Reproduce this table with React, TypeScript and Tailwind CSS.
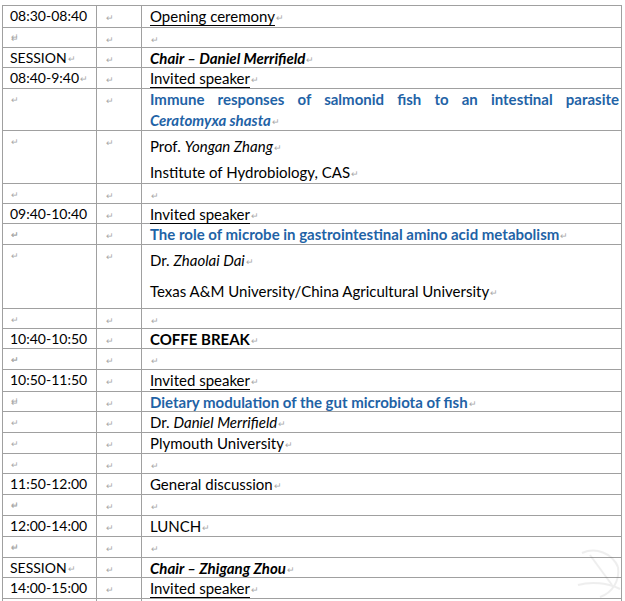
import React from "react";

type Row = {
  h: string;
  c1?: React.ReactNode;
  c3?: React.ReactNode;
  tall?: boolean;
  blank?: boolean;
};

const Mark = () => (
  <span className="ml-[1px] inline-block text-[9px] leading-none text-[#a8a8a8] align-[1px]">↵</span>
);

const Blue = ({ children }: { children: React.ReactNode }) => (
  <span className="font-bold text-[#1f63a6]">{children}</span>
);

const U = ({ children }: { children: React.ReactNode }) => (
  <span className="underline decoration-1 underline-offset-[3px]">{children}</span>
);

const rows: Row[] = [
  { h: "h-[22px]", c1: "08:30-08:40", c3: <U>Opening ceremony</U> },
  { h: "h-[20px]" },
  { h: "h-[20px]", c1: "SESSION", c3: <span className="font-bold italic">Chair – Daniel Merrifield</span> },
  { h: "h-[21px]", c1: "08:40-9:40", c3: <U>Invited speaker</U> },
  {
    h: "h-[42px]",
    tall: true,
    c3: (
      <div className="leading-[21px]">
        <div className="text-justify [text-align-last:justify]">
          <Blue>Immune responses of salmonid fish to an intestinal parasite</Blue>
        </div>
        <div>
          <Blue>
            <span className="italic">Ceratomyxa shasta</span>
          </Blue>
          <Mark />
        </div>
      </div>
    ),
  },
  {
    h: "h-[53px]",
    tall: true,
    c3: (
      <div className="flex flex-col gap-[6px] pt-[5px]">
        <div className="leading-[20px]">
          Prof. <span className="italic">Yongan Zhang</span>
          <Mark />
        </div>
        <div className="leading-[20px]">
          Institute of Hydrobiology, CAS
          <Mark />
        </div>
      </div>
    ),
  },
  { h: "h-[20px]" },
  { h: "h-[20px]", c1: "09:40-10:40", c3: <U>Invited speaker</U> },
  { h: "h-[21px]", c3: <Blue>The role of microbe in gastrointestinal amino acid metabolism</Blue> },
  {
    h: "h-[64px]",
    tall: true,
    c3: (
      <div className="flex flex-col gap-[11px] pt-[5px]">
        <div className="leading-[20px]">
          Dr. <span className="italic">Zhaolai Dai</span>
          <Mark />
        </div>
        <div className="leading-[20px]">
          Texas A&amp;M University/China Agricultural University
          <Mark />
        </div>
      </div>
    ),
  },
  { h: "h-[20px]" },
  { h: "h-[20px]", c1: "10:40-10:50", c3: <span className="font-bold">COFFE BREAK</span> },
  { h: "h-[21px]" },
  { h: "h-[22px]", c1: "10:50-11:50", c3: <U>Invited speaker</U> },
  { h: "h-[20px]", c3: <Blue>Dietary modulation of the gut microbiota of fish</Blue> },
  { h: "h-[21px]", c3: <>Dr. <span className="italic">Daniel Merrifield</span></> },
  { h: "h-[21px]", c3: "Plymouth University" },
  { h: "h-[20px]" },
  { h: "h-[21px]", c1: "11:50-12:00", c3: "General discussion" },
  { h: "h-[21px]" },
  { h: "h-[21px]", c1: "12:00-14:00", c3: "LUNCH" },
  { h: "h-[21px]" },
  { h: "h-[20px]", c1: "SESSION", c3: <span className="font-bold italic">Chair – Zhigang Zhou</span> },
  { h: "h-[21px]", c1: "14:00-15:00", c3: <U>Invited speaker</U> },
  { h: "h-[21px]", blank: true },
];

export default function App() {
  return (
    <div
      className="relative h-[601px] w-[625px] overflow-hidden bg-white text-[15px] text-black"
      style={{ fontFamily: "Lato, 'Open Sans', sans-serif" }}
    >
      <div className="ml-[2px] mt-[5px] flex w-[620px] flex-col border-l border-t border-[#a0a0a0]">
        {rows.map((r, i) => (
          <div key={i} className={`flex border-b border-[#a0a0a0] ${r.h}`}>
            <div className="flex w-[94px] items-start border-r border-[#a0a0a0] pl-[7px] text-[14px] leading-[20px]">
              {!r.blank && (
                <div>
                  {r.c1}
                  <Mark />
                </div>
              )}
            </div>
            <div className="w-[45px] border-r border-[#a0a0a0] pl-[8px] leading-[20px]">
              {!r.blank && <Mark />}
            </div>
            <div className="flex-1 border-r border-[#a0a0a0] pl-[8px] pr-[2px] leading-[20px]">
              {r.blank ? null : r.tall ? (
                r.c3
              ) : (
                <div>
                  {r.c3}
                  <Mark />
                </div>
              )}
            </div>
          </div>
        ))}
      </div>
      <svg
        className="pointer-events-none absolute left-[572px] top-[545px] opacity-[0.1]"
        width="52"
        height="56"
        viewBox="0 0 52 56"
        fill="none"
        stroke="#666"
        strokeWidth="2"
      >
        <path d="M10 8 C24 2 40 8 46 22" />
        <path d="M18 10 L40 40" />
        <path d="M46 22 C48 36 40 48 28 52" />
        <path d="M6 40 C20 36 36 38 48 44" />
      </svg>
    </div>
  );
}
